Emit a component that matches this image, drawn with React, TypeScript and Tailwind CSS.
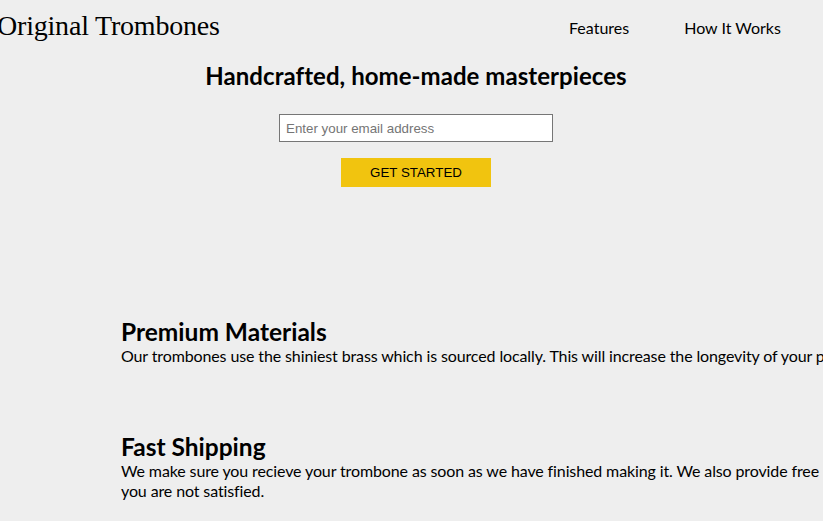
import React from "react";

export default function App() {
  return (
    <div className="min-h-screen w-full overflow-hidden bg-[#eeeeee] text-black" style={{ fontFamily: "Lato, 'Noto Sans', sans-serif" }}>
      <div className="w-[1000px]">
        <header className="flex h-[52px] items-center">
          <div className="w-[572px] shrink-0 -ml-[3px]">
            <span className="text-[28px] leading-none tracking-[-0.2px]" style={{ fontFamily: "'Liberation Serif', serif" }}>
              Original Trombones
            </span>
          </div>
          <nav className="flex gap-[55px] pt-[3px] text-[16px]">
            <a>Features</a>
            <a>How It Works</a>
            <a>Pricing</a>
          </nav>
        </header>

        <section className="flex w-[832px] flex-col items-center">
          <h1 className="mt-[9px] text-[24px] font-bold leading-[30px] tracking-[0.05px]">Handcrafted, home-made masterpieces</h1>
          <input
            className="mt-[23px] h-[28px] w-[274px] border border-[#767676] bg-white px-[6px] text-[13.33px] placeholder:text-[#757575]"
            style={{ fontFamily: "'Liberation Sans', Arial, sans-serif" }}
            placeholder="Enter your email address"
          />
          <button
            className="mt-[16px] h-[29px] w-[150px] bg-[#f1c40f] text-[13.33px] text-black"
            style={{ fontFamily: "'Liberation Sans', Arial, sans-serif" }}
          >
            GET STARTED
          </button>
        </section>

        <section className="ml-[121px] mt-[130px] w-[780px]">
          <div>
            <h2 className="text-[24.5px] font-bold leading-[29px]">Premium Materials</h2>
            <p className="text-[16px] leading-[20px] tracking-[-0.12px]">
              Our trombones use the shiniest brass which is sourced locally. This will increase the longevity of your purchase.
            </p>
          </div>
          <div className="mt-[66px]">
            <h2 className="text-[24.5px] font-bold leading-[29px]">Fast Shipping</h2>
            <p className="text-[16px] leading-[20px] tracking-[-0.12px]">
              We make sure you recieve your trombone as soon as we have finished making it. We also provide free returns if you are not satisfied.
            </p>
          </div>
        </section>
      </div>
    </div>
  );
}
